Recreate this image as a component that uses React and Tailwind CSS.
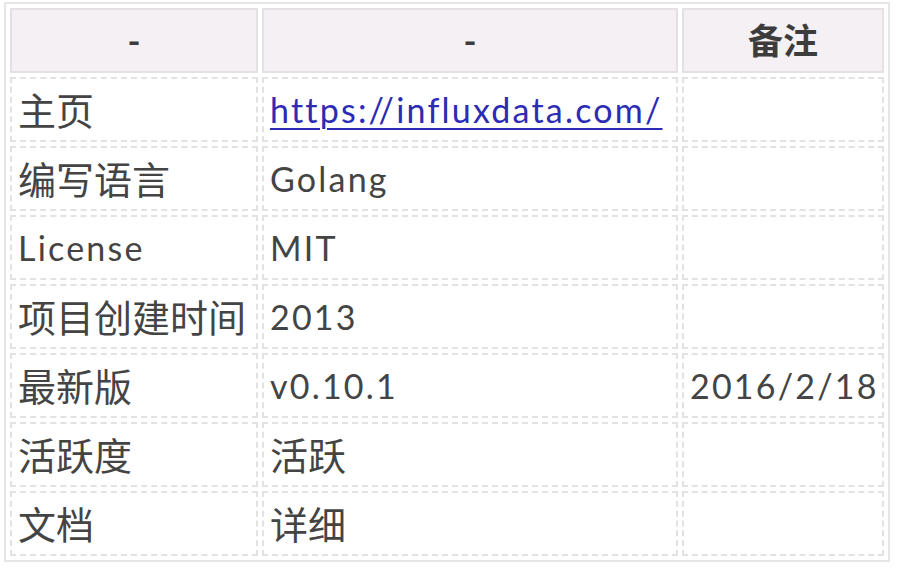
import React from "react";

const rows = [
  { k: "主页", v: "https://influxdata.com/", link: true, note: "" },
  { k: "编写语言", v: "Golang", note: "" },
  { k: "License", v: "MIT", note: "" },
  { k: "项目创建时间", v: "2013", note: "" },
  { k: "最新版", v: "v0.10.1", note: "2016/2/18" },
  { k: "活跃度", v: "活跃", note: "" },
  { k: "文档", v: "详细", note: "" },
];

// CJK text runs a little larger than the latin text in the source
const isCjk = (s) => /[\u4e00-\u9fff]/.test(s);

function Cell({ text, link }) {
  const size = isCjk(text) ? "text-[38px]" : "text-[34px] tracking-[2.2px]";
  return (
    <td className="h-[65px] border-2 border-dashed border-[#e2e2e2] px-[6px] align-middle text-left whitespace-nowrap">
      {link ? (
        <a href="#" className={`${size} text-[#2b2bb5] underline decoration-2 underline-offset-[5px]`}>
          {text}
        </a>
      ) : (
        <span className={`${size} text-[#444]`}>{text}</span>
      )}
    </td>
  );
}

export default function App() {
  return (
    <div
      className="w-[898px] h-[570px] bg-white pl-[4px] pt-[2px]"
      style={{ fontFamily: "Lato, 'Noto Sans CJK SC', sans-serif" }}
    >
      <table className="table-fixed w-[886px] border-separate border-spacing-[4px] border-2 border-[#e6e6e6] leading-none">
        <colgroup>
          <col className="w-[248px]" />
          <col className="w-[416px]" />
          <col className="w-[202px]" />
        </colgroup>
        <thead>
          <tr>
            {["-", "-", "备注"].map((h, i) => (
              <th
                key={i}
                className="h-[65px] border-2 border-[#e4e1e4] bg-[#f4f0f4] text-center align-middle text-[35px] font-bold text-[#3c3c3c]"
              >
                {h}
              </th>
            ))}
          </tr>
        </thead>
        <tbody>
          {rows.map((r) => (
            <tr key={r.k}>
              <Cell text={r.k} />
              <Cell text={r.v} link={r.link} />
              <Cell text={r.note} />
            </tr>
          ))}
        </tbody>
      </table>
    </div>
  );
}
